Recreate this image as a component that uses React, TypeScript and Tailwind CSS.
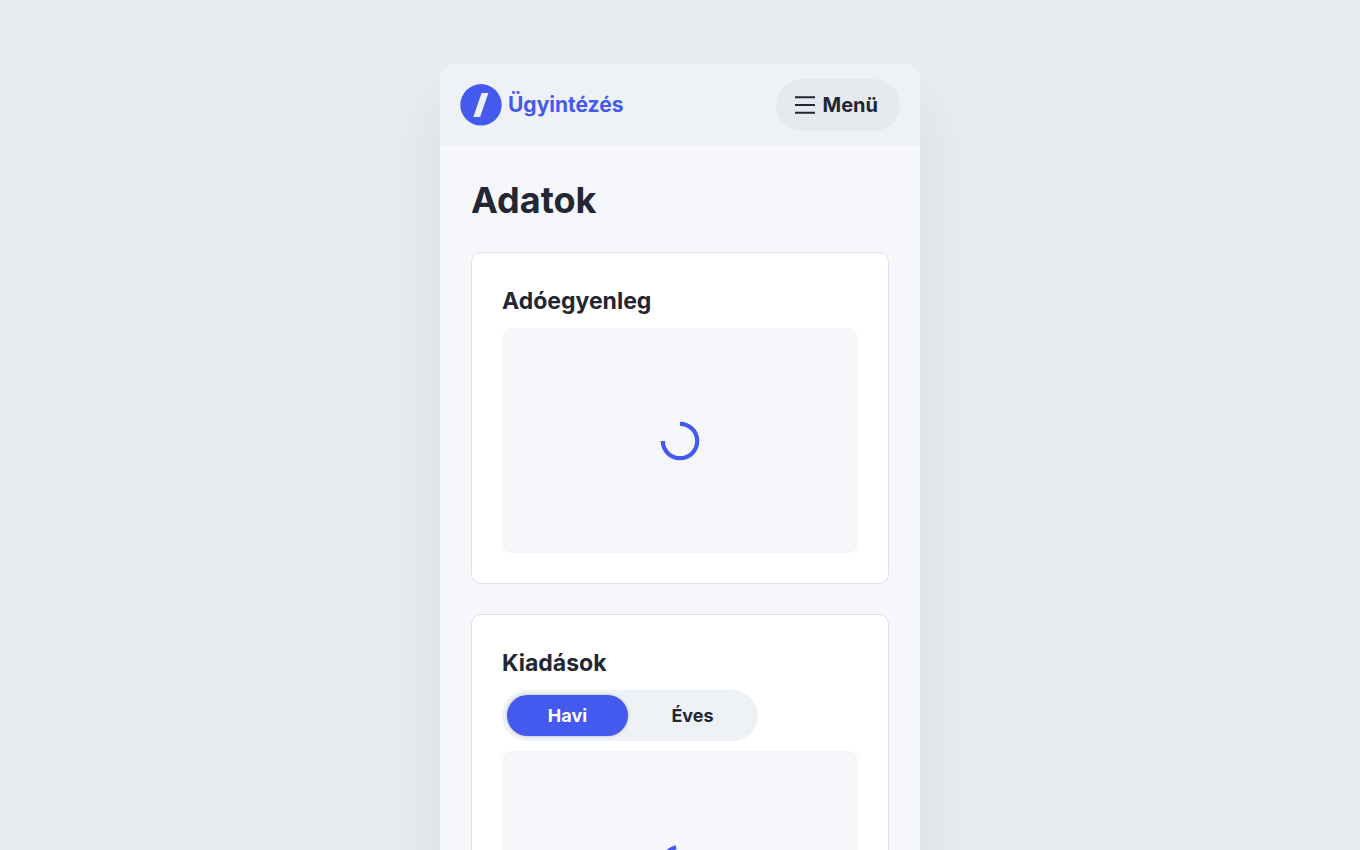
import { useState } from "react";
import clsx from "clsx";

function Logo() {
  return (
    <svg viewBox="0 0 42 42" className="size-[42px]" aria-hidden="true">
      <circle cx="21" cy="20.8" r="20.7" fill="#4459ee" />
      <path d="M21.6 9h6.8l-8.3 24h-6.8z" fill="#eef2f7" />
    </svg>
  );
}

function MenuIcon() {
  return (
    <svg viewBox="0 0 20 20" className="size-5" fill="none" stroke="currentColor" strokeWidth="2" aria-hidden="true">
      <path d="M0 2.3h20M0 10h20M0 17.7h20" />
    </svg>
  );
}

function Spinner({ turned = false }: { turned?: boolean }) {
  return (
    <svg viewBox="0 0 40 40" className={clsx("size-10", turned && "rotate-77")} role="status" fill="none">
      <path d="M20 2.8a17.2 17.2 0 1 1-17.2 17.2" stroke="#4459ee" strokeWidth="4.2" />
    </svg>
  );
}

function LoadingPanel({ turned }: { turned?: boolean }) {
  return (
    <div className="flex h-[225px] items-center justify-center rounded-[10px] bg-[#f5f7fb]">
      <Spinner turned={turned} />
    </div>
  );
}

const periods = ["Havi", "Éves"];

export default function App() {
  const [period, setPeriod] = useState("Havi");

  return (
    <div className="h-screen overflow-y-auto bg-[#e8ecf1] px-4 pt-16 font-['Inter',sans-serif] text-[#232733] [scrollbar-width:none]">
      <div className="mx-auto max-w-[480px] rounded-t-2xl bg-[#f5f7fb] shadow-[0_40px_64px_rgba(35,39,60,0.08)]">
        <header className="flex items-center justify-between rounded-t-2xl bg-[#eef2f7] px-5 py-[15px]">
          <a href="#" className="flex items-center gap-1.5 text-[21px] font-bold text-[#4459ee]">
            <Logo />
            Ügyintézés
          </a>
          <button type="button" className="flex h-13 items-center gap-2 rounded-full bg-[#e6e9ee] pr-[22px] pl-[19px] text-xl font-bold">
            <MenuIcon />
            Menü
          </button>
        </header>

        <main className="px-[31px] pt-8 pb-8">
          <h1 className="text-4xl leading-[44px] font-bold">Adatok</h1>
          <div className="mt-[30px] flex flex-col gap-[30px]">
            <section className="rounded-[10px] border border-[#dce0e8] bg-white px-[30px] pt-8 pb-[30px]">
              <h2 className="mb-[11px] text-[23px] leading-8 font-bold">Adóegyenleg</h2>
              <LoadingPanel />
            </section>
            <section className="rounded-[10px] border border-[#dce0e8] bg-white px-[30px] pt-8 pb-[30px]">
              <h2 className="mb-[11px] text-[23px] leading-8 font-bold">Kiadások</h2>
              <div className="mb-[10px] flex w-64 gap-1 rounded-full bg-[#eef2f7] p-[5px]">
                {periods.map((name) => (
                  <button
                    key={name}
                    type="button"
                    aria-pressed={period === name}
                    onClick={() => setPeriod(name)}
                    className={clsx(
                      "h-[41px] flex-1 rounded-full text-lg font-bold",
                      period === name && "bg-[#4459ee] text-white shadow-[0_0_3px_rgba(35,39,51,0.3)]",
                    )}
                  >
                    {name}
                  </button>
                ))}
              </div>
              <LoadingPanel turned />
            </section>
          </div>
        </main>
      </div>
    </div>
  );
}
